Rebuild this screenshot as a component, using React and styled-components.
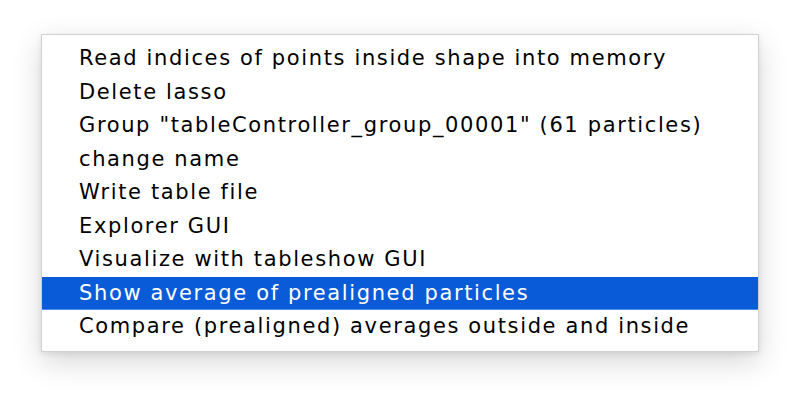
import React from "react";
import styled, { createGlobalStyle } from "styled-components";

const GlobalStyle = createGlobalStyle`
  html, body {
    margin: 0;
    padding: 0;
    background: #ffffff;
  }
  body {
    width: 800px;
    height: 398px;
    overflow: hidden;
  }
`;

const Page = styled.div`
  width: 800px;
  height: 398px;
  padding: 34px 0 0 41px;
  box-sizing: border-box;
`;

const StyledMenu = styled.ul`
  list-style: none;
  margin: 0;
  width: 718px;
  padding: 7px 0 7px 0;
  box-sizing: border-box;
  background-color: #ffffff;
  border: 1px solid rgba(0, 0, 0, 0.18);
  box-shadow: 0px 10px 28px rgba(0, 0, 0, 0.16), 0px 2px 6px rgba(0, 0, 0, 0.08);
  font: normal normal 400 21px "DejaVu Sans", sans-serif;
  letter-spacing: 1.63px;
`;

const StyledMenuItem = styled.li`
  height: 33.5px;
  line-height: 33.5px;
  padding-left: 37px;
  white-space: nowrap;
  color: ${(props) => (props.selected ? "#ffffff" : "#000000")};
  background-color: ${(props) => (props.selected ? "#0a5bd7" : "transparent")};
  border-bottom: ${(props) => (props.selected ? "1px solid #4d8ff0" : "none")};
  box-sizing: border-box;
  cursor: default;
`;

const items = [
  "Read indices of points inside shape into memory",
  "Delete lasso",
  'Group "tableController_group_00001" (61 particles)',
  "change name",
  "Write table file",
  "Explorer GUI",
  "Visualize with tableshow GUI",
  "Show average of prealigned particles",
  "Compare (prealigned) averages outside and inside",
];

export default function App() {
  return (
    <>
      <GlobalStyle />
      <Page>
        <StyledMenu>
          {items.map((label, i) => (
            <StyledMenuItem key={label} selected={i === 7}>
              {label}
            </StyledMenuItem>
          ))}
        </StyledMenu>
      </Page>
    </>
  );
}
